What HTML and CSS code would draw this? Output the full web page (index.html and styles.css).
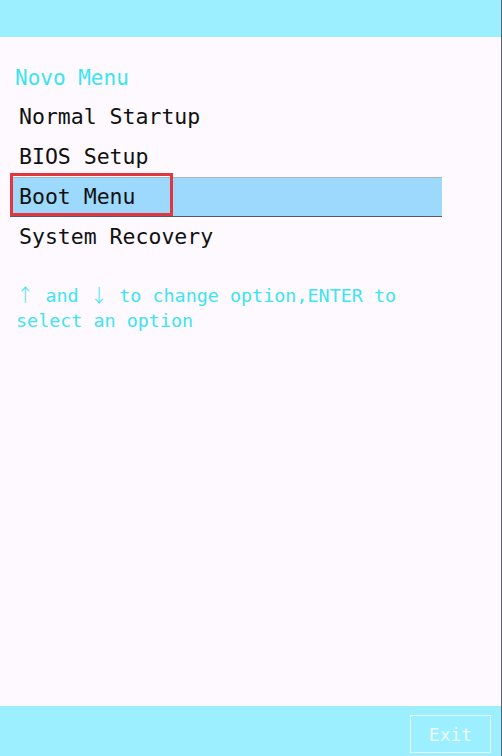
FILE: index.html
```html
<!DOCTYPE html>
<html>
<head>
<meta charset="utf-8">
<link rel="stylesheet" href="styles.css">
</head>
<body>
<div class="screen">
  <div class="topbar"></div>
  <div class="content">
    <div class="title">Novo Menu</div>
    <ul class="menu">
      <li class="item">Normal Startup</li>
      <li class="item">BIOS Setup</li>
      <li class="item selected">Boot Menu</li>
      <li class="item">System Recovery</li>
    </ul>
    <p class="help"><span class="arrow">↑</span> and <span class="arrow">↓</span> to change option,ENTER to<br>select an option</p>
  </div>
  <div class="bottombar">
    <button class="exit">Exit</button>
  </div>
</div>
</body>
</html>
```
FILE: styles.css
```css
html, body {
  margin: 0;
  padding: 0;
  background: #fdf9fe;
}
.screen {
  width: 501px;
  height: 756px;
  border-right: 1px solid #5a5f6e;
  display: flex;
  flex-direction: column;
  font-family: "DejaVu Sans Mono", "Liberation Mono", monospace;
  background: #fdf9fe;
}
.topbar {
  height: 37px;
  background: #9befff;
  flex: none;
}
.content {
  flex: 1;
  padding-top: 20px;
}
.title {
  font-size: 21px;
  line-height: 40px;
  height: 40px;
  color: #3ce4f2;
  padding-left: 15px;
  padding-top: 1px;
  box-sizing: border-box;
}
.menu {
  list-style: none;
  margin: 0 0 0 10px;
  padding: 0;
  width: 432px;
}
.item {
  font-size: 21.5px;
  line-height: 40px;
  height: 40px;
  padding-left: 9px;
  color: #111;
  box-sizing: border-box;
}
.item.selected {
  position: relative;
  background: #9dd9fc;
  border-top: 1px solid #a9b4bd;
  border-bottom: 1px solid #555a6a;
  line-height: 38px;
}
.item.selected::after {
  content: "";
  position: absolute;
  left: 0;
  top: -5px;
  width: 163px;
  height: 43px;
  border: 3px solid #e2373d;
  box-sizing: border-box;
}
.help {
  margin: 26px 0 0 0;
  padding-left: 16px;
  font-size: 18.4px;
  line-height: 25px;
  color: #3ee4f2;
}
.arrow {
  font-family: "Noto Sans CJK SC", "DejaVu Sans", sans-serif;
  font-weight: 300;
  line-height: 20px;
}
.bottombar {
  height: 50px;
  flex: none;
  background: #9befff;
  display: flex;
  justify-content: flex-end;
  align-items: flex-start;
  padding: 9px 10px 0 0;
  box-sizing: border-box;
}
.exit {
  width: 81px;
  height: 38px;
  background: transparent;
  border: 1px solid #e8fbff;
  color: #eefcff;
  font-family: "DejaVu Sans Mono", "Liberation Mono", monospace;
  font-size: 18px;
  padding: 0;
}
```
